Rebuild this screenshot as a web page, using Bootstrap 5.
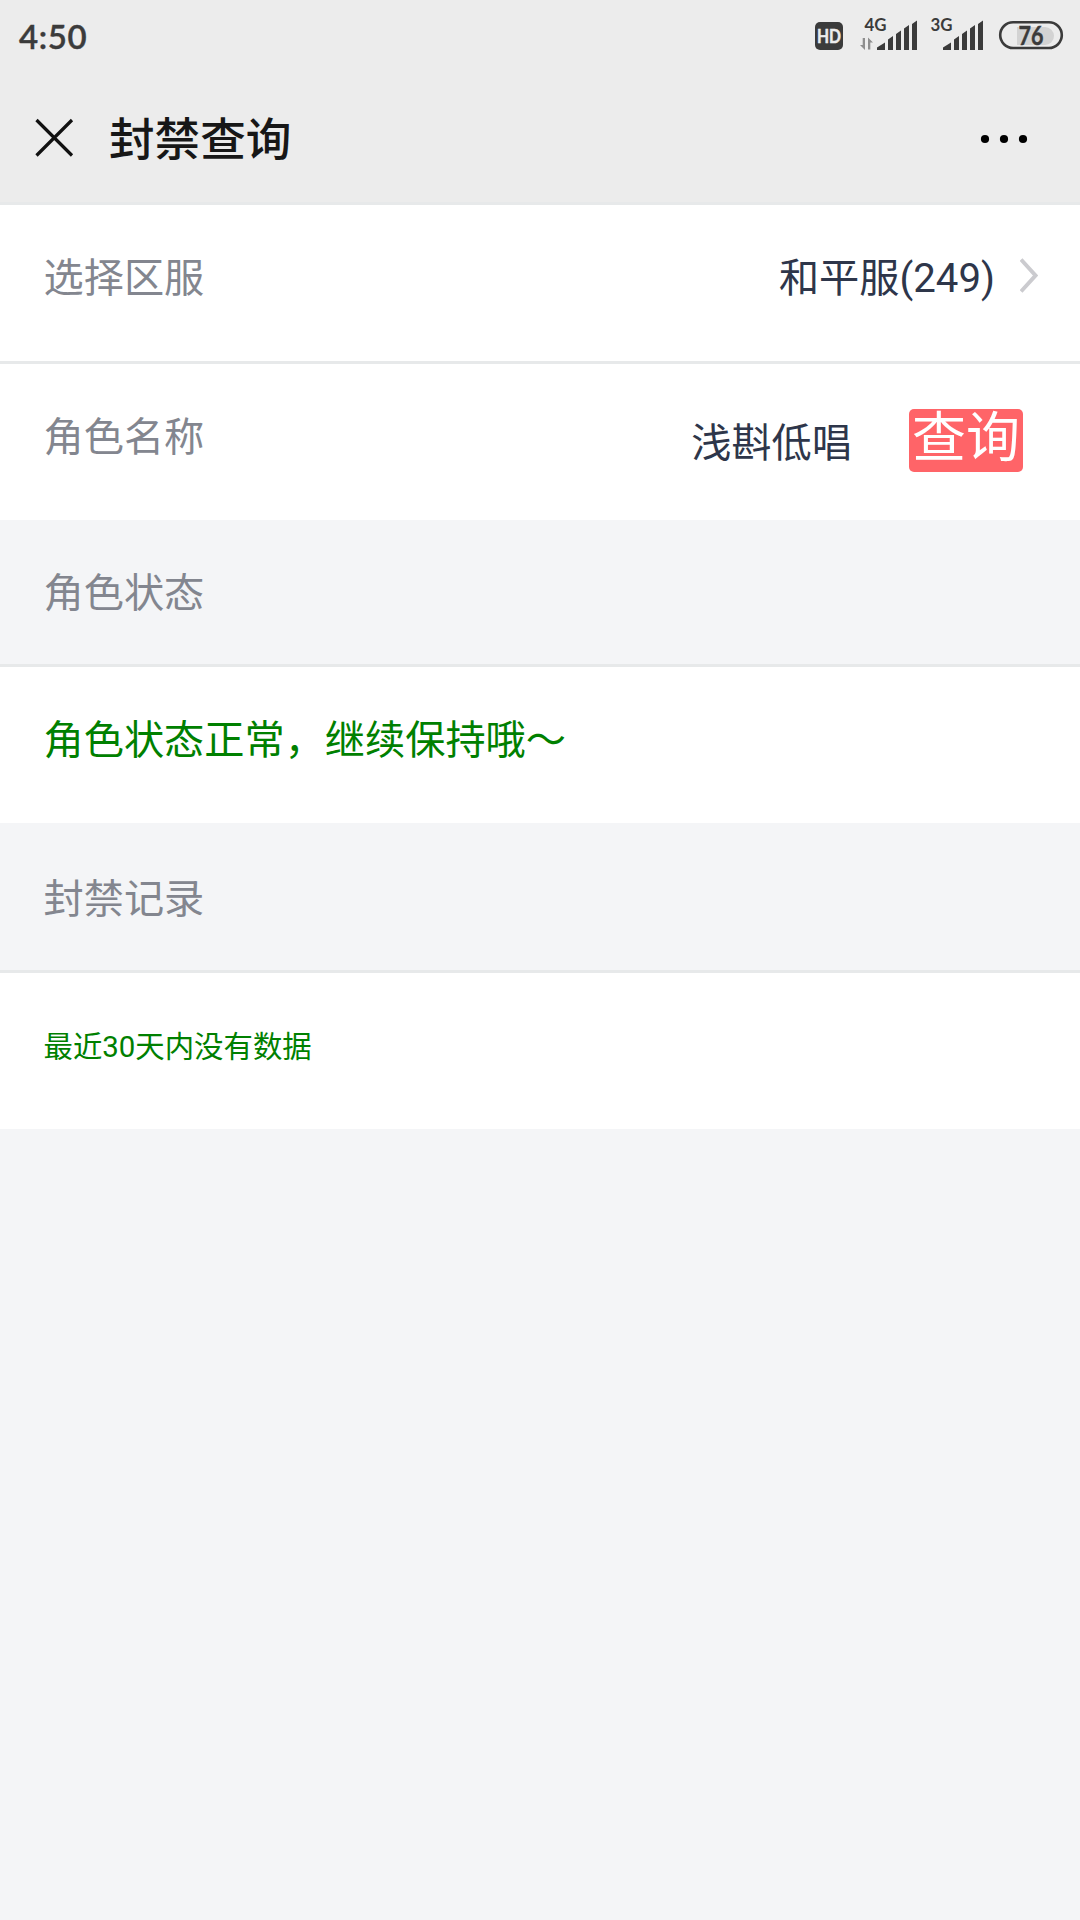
<!DOCTYPE html>
<html lang="zh-CN">
<head>
<meta charset="utf-8">
<meta name="viewport" content="width=device-width, initial-scale=1">
<title>封禁查询</title>
<link href="https://cdn.jsdelivr.net/npm/bootstrap@5.3.0/dist/css/bootstrap.min.css" rel="stylesheet">
<style>
body{background:#f4f5f7;font-family:Roboto,"Noto Sans CJK SC",sans-serif;font-size:40.2px;line-height:60px;color:#2e364a;min-height:1920px}
.topbar{background:#ececec;height:202px}
.statusbar{height:72px;padding:0 16px 0 19px;color:#3b3b3b;font-family:Lato,sans-serif}
.clock{font-size:33px;font-weight:600;line-height:72px;letter-spacing:.6px;-webkit-text-stroke:.4px #3b3b3b}
.status-icons text{font-family:Lato,sans-serif;font-weight:700}
.titlebar{height:130px;padding:0 52px 0 35px}
.close-icon{margin-top:46px}
.dots-icon{margin-top:61px}
.page-title{font-size:45.6px;font-weight:500;line-height:68px;color:#171717;margin:35px 0 0 35px}
.line-item{background:#fff;height:159px;padding:44px 43px 0 43.5px;border-top:3px solid #e7e9ea}
.section-head{height:144px;padding:44px 43.5px 0}
.section-head.tall{height:147px;padding-top:47px}
.caption-text{color:#83868f}
.ok-text{color:#008000}
.tiny-text{font-size:29.4px}
.chevron{margin:9px -1px 0 25px}
.role-name{margin:6px 57px 0 0}
.btn-query{width:114px;height:63px;padding:0 0 4px;background:#ff6468;color:#fff;font-size:54px;line-height:58px;border:0;border-radius:5px;margin:1px 14px 0 0;white-space:nowrap}
.btn-query:hover{background:#ff6468;color:#fff}
</style>
</head>
<body>
<header class="topbar">
  <div class="statusbar d-flex justify-content-between align-items-start">
    <span class="clock">4:50</span>
    <svg class="status-icons" width="250" height="72" viewBox="814 0 250 72" fill="#3b3b3b">
      <rect x="815" y="22" width="28" height="28" rx="5"/>
      <text x="817" y="43" font-size="18" textLength="24" lengthAdjust="spacingAndGlyphs" fill="#ececec" stroke="#ececec" stroke-width=".5">HD</text>
      <text x="864.500" y="31" font-size="16.5" textLength="22" lengthAdjust="spacingAndGlyphs">4G</text>
      <g fill="#8e8e8e"><path d="M862.7 38h2.3v12l-5-5h2.7z"/><path d="M868 49.500V37.500l5 5h-2.700v7z"/></g>
      <g id="bars"><path d="M877 50v-2.500l8-5V50zM888 39.500l5-3.500v14h-5zM896 34l5-3.500V50h-5zM904 28.500l5-3.500v25h-5zM912 24l5-3.500V50h-5z"/></g>
      <use href="#bars" x="66"/>
      <text x="930.500" y="31" font-size="16.500" textLength="22" lengthAdjust="spacingAndGlyphs">3G</text>
      <path d="M1017 27h28a9 9 0 0 1 0 18h-28z" fill="#d3d3d3"/>
      <rect x="1000.200" y="22.200" width="61.600" height="25.800" rx="12.900" fill="none" stroke="#3b3b3b" stroke-width="2.600"/>
      <text x="1018.500" y="44.500" font-size="26" textLength="25" lengthAdjust="spacingAndGlyphs" stroke="#3b3b3b" stroke-width=".4">76</text>
    </svg>
  </div>
  <div class="titlebar d-flex align-items-start">
    <svg class="close-icon" width="39" height="39" viewBox="0 0 39 39" fill="none" stroke="#111" stroke-width="3.200"><path d="M1.500 2L37 37.500M37 2L1.500 37.500"/></svg>
    <h1 class="page-title">封禁查询</h1>
    <svg class="dots-icon ms-auto" width="48" height="12" viewBox="0 0 48 12"><circle cx="5" cy="6" r="4.100"/><circle cx="24" cy="6" r="4.100"/><circle cx="43" cy="6" r="4.100"/></svg>
  </div>
</header>
<main>
  <div class="line-item d-flex justify-content-between align-items-start">
    <span class="caption-text">选择区服</span>
    <span class="d-flex align-items-start"><span>和平服(249)</span>
      <svg class="chevron" width="18" height="35" viewBox="0 0 18 35" fill="none" stroke="#cbcbcf" stroke-width="4"><path d="M1 1.500L15.500 17.500L1 33.500"/></svg></span>
  </div>
  <div class="line-item d-flex align-items-start">
    <span class="caption-text me-auto">角色名称</span>
    <span class="role-name">浅斟低唱</span>
    <button type="button" class="btn btn-query">查询</button>
  </div>
  <div class="section-head caption-text">角色状态</div>
  <div class="line-item ok-text">角色状态正常，继续保持哦～</div>
  <div class="section-head tall caption-text">封禁记录</div>
  <div class="line-item ok-text tiny-text">最近30天内没有数据</div>
</main>
<script src="https://cdn.jsdelivr.net/npm/bootstrap@5.3.0/dist/js/bootstrap.bundle.min.js"></script>
</body>
</html>
